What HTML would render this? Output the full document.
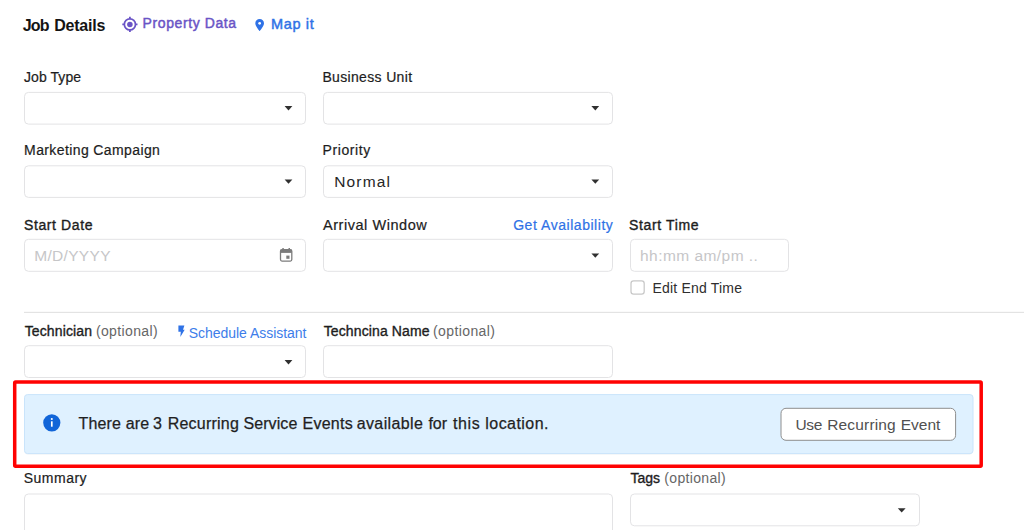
<!DOCTYPE html>
<html lang="en">
<head>
<meta charset="utf-8">
<title>Job Details</title>
<style>
  html, body { margin: 0; padding: 0; }
  body {
    width: 1024px; height: 530px; overflow: hidden; position: relative;
    background: #ffffff;
    font-family: "Liberation Sans", sans-serif;
    color: #1f1f1f;
  }
  #shapes { position: absolute; left: 0; top: 0; }
  .t { position: absolute; white-space: nowrap; line-height: 18px; font-size: 14px; margin: 0; }
  .lbl  { color: #1d1d1d; -webkit-text-stroke: 0.2px #1d1d1d; }
  .lblb { color: #1d1d1d; -webkit-text-stroke: 0.36px #1d1d1d; }
  .opt  { color: #666666; }
  .blue { color: #2f72e6; }
  .al   { font-size: 16px; color: #1f1f1f; -webkit-text-stroke: 0.25px #1f1f1f; }
  .bt   { font-size: 15.5px; color: #505050; }
  .ttl  { font-size: 16px; font-weight: 700; color: #141414; }
  .ph   { color: #c6c6c8; font-size: 15px; }
</style>
</head>
<body>

<svg id="shapes" width="1024" height="530" viewBox="0 0 1024 530">
  <g id="boxes" fill="#ffffff" stroke="#e3e3e5" stroke-width="1">
    <rect x="24.5"  y="92.4"  width="281" height="31.7" rx="4"/>
    <rect x="323.5" y="92.4"  width="289" height="31.7" rx="4"/>
    <rect x="24.5"  y="165.8" width="281" height="31.6" rx="4"/>
    <rect x="323.5" y="165.8" width="289" height="31.6" rx="4"/>
    <rect x="24.5"  y="239.3" width="281" height="32" rx="4"/>
    <rect x="323.5" y="239.3" width="289" height="32" rx="4"/>
    <rect x="630.5" y="239.3" width="158" height="32" rx="4"/>
    <rect x="24.5"  y="345.7" width="281" height="31.8" rx="4"/>
    <rect x="323.5" y="345.7" width="289" height="31.8" rx="4"/>
    <rect x="24.5"  y="494"   width="588" height="60" rx="4"/>
    <rect x="630.5" y="494"   width="289" height="31.8" rx="4"/>
  </g>
  <g id="carets" fill="#303030">
    <path d="M284.600 106.100h7.800l-3.900 4.300z"/>
    <path d="M591.400 106.100h7.800l-3.900 4.300z"/>
    <path d="M284.600 179.500h7.800l-3.900 4.300z"/>
    <path d="M591.400 179.500h7.800l-3.900 4.300z"/>
    <path d="M591.400 253.400h7.800l-3.900 4.300z"/>
    <path d="M284.600 360.100h7.800l-3.900 4.300z"/>
    <path d="M897.800 508.200h7.800l-3.900 4.300z"/>
  </g>
  <!-- divider -->
  <rect x="24" y="311.850" width="1000" height="1" fill="#dfdfdf"/>
  <!-- checkbox -->
  <rect x="631" y="280.800" width="13.200" height="13.200" rx="2.600" fill="#fff" stroke="#c8c8c8" stroke-width="1.250"/>
  <!-- red highlight -->
  <rect x="14.700" y="382.050" width="966.500" height="84.200" rx="0.900" fill="none" stroke="#ff0202" stroke-width="3.500"/>
  <!-- alert -->
  <rect x="25" y="396" width="947.500" height="58.800" rx="3" fill="#000" fill-opacity="0.035"/>
  <rect x="24.500" y="394.600" width="948.500" height="59" rx="3" fill="#dff1ff" stroke="#c9e4fb" stroke-width="1"/>
  <!-- button -->
  <rect x="781" y="408.300" width="174.600" height="32" rx="5" fill="#ffffff" stroke="#8e8e8e" stroke-width="1"/>

  <!-- property data icon -->
  <g id="ic-prop" fill="none" stroke="#6a54c6">
    <circle cx="129.900" cy="24.400" r="5.550" stroke-width="1.700"/>
    <path d="M129.900 16.800v2M129.900 30v2M122.300 24.400h2M135.500 24.400h2" stroke-width="1.800"/>
    <circle cx="129.900" cy="24.400" r="2.750" fill="#6a54c6" stroke="none"/>
  </g>
  <!-- map pin -->
  <path id="ic-map" d="M259.650 18.900c-2.450 0-4.350 1.900-4.350 4.300 0 3.100 4.350 7.900 4.350 7.900s4.350-4.800 4.350-7.900c0-2.400-1.900-4.300-4.350-4.300z" fill="#2f72e6"/>
  <circle cx="259.650" cy="23.300" r="1.350" fill="#ffffff"/>
  <!-- calendar -->
  <g id="ic-cal" fill="#7c7c7c">
    <rect x="280.500" y="249.700" width="11.300" height="11.400" rx="1.500" fill="none" stroke="#7c7c7c" stroke-width="1.300"/>
    <rect x="280.500" y="249.700" width="11.300" height="3.200"/>
    <rect x="282.300" y="248" width="1.500" height="2.500"/>
    <rect x="288.500" y="248" width="1.500" height="2.500"/>
    <rect x="286.300" y="255.600" width="3.200" height="3.200"/>
  </g>
  <!-- bolt -->
  <path id="ic-bolt" d="M178.400 325.400h6l-1.400 4.300h1.700l-4.400 7.300 0.500-5.300h-2.400z" fill="#2f72e6"/>
  <!-- info -->
  <circle cx="51.800" cy="422.800" r="8.600" fill="#1165d8"/>
  <circle cx="51.800" cy="419" r="1.050" fill="#fff"/>
  <rect x="50.950" y="421.300" width="1.700" height="5.400" fill="#fff"/>
</svg>

<!-- Header -->
<div class="t ttl" id="tw0" style="left:22.8px; top:17px; letter-spacing:-0.91px;">Job</div>
<div class="t ttl" id="tw1" style="left:54.2px; top:17px; letter-spacing:-0.2px;">Details</div>
<div class="t" id="h-prop" style="left:142.6px; top:14px; letter-spacing:0.59px; color:#6a54c6; -webkit-text-stroke:0.45px #6a54c6;">Property Data</div>
<div class="t blue" id="h-map" style="left:271px; top:15px; letter-spacing:0.64px; -webkit-text-stroke:0.45px #2f72e6; font-size:14.5px;">Map it</div>

<!-- Row 1 -->
<div class="t lbl" id="l-jobtype" style="left:24px; top:68px; letter-spacing:0.07px;">Job Type</div>
<div class="t lbl" id="l-bu" style="left:322.4px; top:68px; letter-spacing:0.34px;">Business Unit</div>

<!-- Row 2 -->
<div class="t lbl" id="l-mc" style="left:24.1px; top:141px; letter-spacing:0.39px;">Marketing Campaign</div>
<div class="t lbl" id="l-pri" style="left:322.5px; top:141px; letter-spacing:0.59px;">Priority</div>
<div class="t" id="v-normal" style="left:334.2px; top:173px; letter-spacing:1.17px; color:#262626; font-size:15.5px;">Normal</div>

<!-- Row 3 -->
<div class="t lblb" id="l-sd" style="left:24px; top:216px; letter-spacing:0.6px;">Start Date</div>
<div class="t ph" id="p-date" style="left:34.2px; top:247px; letter-spacing:0.32px; font-size:15.5px;">M/D/YYYY</div>
<div class="t lbl" id="l-aw" style="left:323px; top:216px; letter-spacing:0.54px; font-size:14.5px;">Arrival Window</div>
<div class="t blue" id="l-ga" style="left:513.2px; top:216px; letter-spacing:0.54px; -webkit-text-stroke:0.2px #2f72e6;">Get Availability</div>
<div class="t lblb" id="l-st" style="left:629.1px; top:216px; letter-spacing:0.63px;">Start Time</div>
<div class="t ph" id="p-time" style="left:640px; top:247px; letter-spacing:0.45px; font-size:15.5px;">hh:mm am/pm ..</div>
<div class="t" id="l-eet" style="left:652.5px; top:279px; letter-spacing:0.19px; color:#2e2e2e;">Edit End Time</div>

<!-- Row 4 -->
<div class="t lblb" id="l-tech" style="left:24.7px; top:322px; letter-spacing:0.12px;">Technician</div>
<div class="t opt" id="o-tech" style="left:95.9px; top:322px; letter-spacing:0.38px;">(optional)</div>
<div class="t" id="l-sa" style="left:188.8px; top:324px; letter-spacing:-0.04px; color:#3d7dea;">Schedule Assistant</div>
<div class="t lblb" id="l-tn" style="left:323.7px; top:322px; letter-spacing:0.12px;">Techncina Name</div>
<div class="t opt" id="o-tn" style="left:433px; top:322px; letter-spacing:0.4px;">(optional)</div>

<!-- Alert -->
<div class="t al" id="aw0" style="left:78.6px; top:415px; letter-spacing:0.13px;">There</div>
<div class="t al" id="aw1" style="left:125.7px; top:415px; letter-spacing:0.14px;">are</div>
<div class="t al" id="aw2" style="left:153.1px; top:415px; letter-spacing:0px;">3</div>
<div class="t al" id="aw3" style="left:167.7px; top:415px; letter-spacing:0.23px;">Recurring</div>
<div class="t al" id="aw4" style="left:243.4px; top:415px; letter-spacing:0.09px;">Service</div>
<div class="t al" id="aw5" style="left:302.5px; top:415px; letter-spacing:0.25px;">Events</div>
<div class="t al" id="aw6" style="left:356.7px; top:415px; letter-spacing:0.39px;">available</div>
<div class="t al" id="aw7" style="left:428.4px; top:415px; letter-spacing:0.03px;">for</div>
<div class="t al" id="aw8" style="left:453px; top:415px; letter-spacing:0.61px;">this</div>
<div class="t al" id="aw9" style="left:485.3px; top:415px; letter-spacing:0.44px;">location.</div>
<div class="t bt" id="bw0" style="left:795.6px; top:416px; letter-spacing:-0.45px;">Use</div>
<div class="t bt" id="bw1" style="left:827.2px; top:416px; letter-spacing:0.17px;">Recurring</div>
<div class="t bt" id="bw2" style="left:900.8px; top:416px; letter-spacing:-0.03px;">Event</div>

<!-- Row 5 -->
<div class="t lbl" id="l-sum" style="left:23.7px; top:469px; letter-spacing:0.5px;">Summary</div>
<div class="t lblb" id="l-tags" style="left:630.4px; top:469px; letter-spacing:0.03px;">Tags</div>
<div class="t opt" id="o-tags" style="left:664.3px; top:469px; letter-spacing:0.33px;">(optional)</div>

</body>
</html>
